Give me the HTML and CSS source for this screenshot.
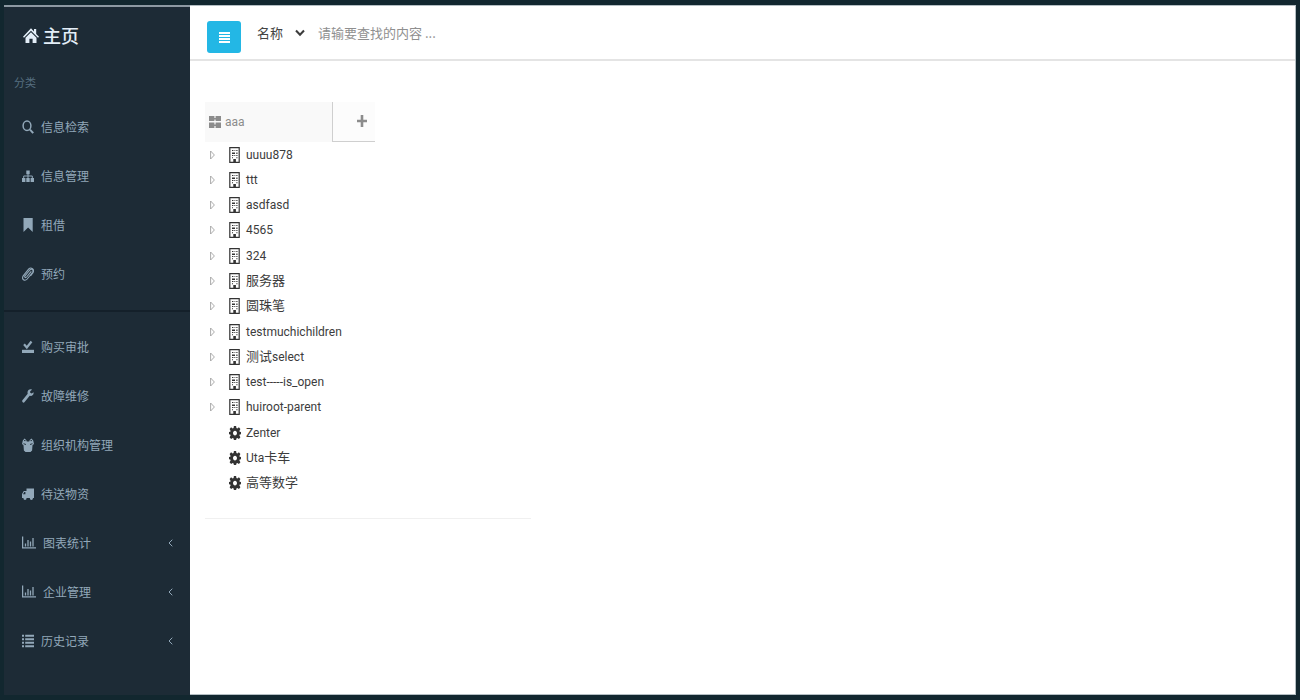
FILE: index.html
```html
<!DOCTYPE html>
<html lang="zh-CN">
<head>
<meta charset="utf-8">
<title>主页</title>
<link rel="stylesheet" href="styles.css">
</head>
<body>
<svg class="sprite" aria-hidden="true">
  <symbol id="chart" viewBox="0 0 14 12"><path d="M.6 0v11.4H14M3.5 7v3M6 3.500v6.500M8.500 5v5M11 1.500v8.500" fill="none" stroke="currentColor" stroke-width="1.300"/></symbol>
  <symbol id="left" viewBox="0 0 5 8"><path d="M4.300.7 1 4l3.300 3.300" fill="none" stroke="currentColor"/></symbol>
  <symbol id="building" viewBox="0 0 11 16"><path d="M.8.7h9.400v14.600H.8z" fill="#fff" stroke="currentColor" stroke-width="1.200"/><path d="M3 3h1.400v1H3zM5.500 3h.8v1h-.8zM7.300 3h1.200v1H7.300zM3 5.500h3V7H3zM7.300 5.500h1.200V7H7.300zM3 8h1.400v1H3zM5.300 8h1v1h-1zM7.300 8h1.200v1H7.300zM3 10.300h1v1H3zM7.300 10.300h1.200v1H7.300zM4.300 12h2.600v3H4.300z" fill="currentColor"/></symbol>
  <symbol id="gear" viewBox="0 0 12 14"><path fill="currentColor" fill-rule="evenodd" d="M4.900 0h2.200l.3 2 1 .5 1.500-1.200 1.500 1.800-1 1.800.3.900 1.300.3v2.100l-1.300.4-.3.900 1 1.800-1.500 1.700-1.500-1.100-1 .5-.3 1.800H4.900l-.3-1.800-1-.5L2.100 13 .6 11.300l1-1.800-.3-.9L0 8.200V6.100l1.300-.3.300-.9-1-1.800 1.500-1.800 1.500 1.200 1-.5zM6 4.700C4.900 4.700 4 5.700 4 7.100s.9 2.500 2 2.500 2-1.100 2-2.500-.9-2.400-2-2.400z"/></symbol>
  <symbol id="tri" viewBox="0 0 5 10"><path d="M.6 1 4.400 5 .6 9z" fill="none" stroke="currentColor" stroke-width=".9"/></symbol>
</svg>
<div class="app">
  <aside class="sidebar">
    <a class="brand" href="#">
      <svg class="home" viewBox="0 0 16 16" aria-hidden="true"><path fill="currentColor" d="M8 .8 11 4V1.600h2.200v4.800L16 9.300l-1 1L8 3.200l-7 7.100-1-1zM8 4.700l5.500 5.600v5.200H9.600v-4.300H6.400v4.300H2.500v-5.200z"/></svg>
      <span>主页</span>
    </a>
    <h2 class="caption">分类</h2>
    <nav>
      <ul class="menu">
        <li><a href="#"><svg class="icon" viewBox="0 0 12 14"><ellipse cx="5" cy="5.800" rx="3.900" ry="4.700" fill="none" stroke="currentColor" stroke-width="1.500"/><path d="m8 9.700 3.200 3.500" stroke="currentColor" stroke-width="2"/></svg><span>信息检索</span></a></li>
        <li><a href="#"><svg class="icon" viewBox="0 0 12 14"><path d="M4.300 1.500h3.400v3.700H4.300zM0 9h3.400v4H0zM4.300 9h3.400v4H4.300zM8.600 9H12v4H8.600z" fill="currentColor"/><path d="M6 5v4M1.700 9V7h8.600v2" fill="none" stroke="currentColor"/></svg><span>信息管理</span></a></li>
        <li><a href="#"><svg class="icon" viewBox="0 0 12 14"><path d="M1.500 0h9.200v14L6.100 9.600 1.500 14z" fill="currentColor"/></svg><span>租借</span></a></li>
        <li><a href="#"><svg class="icon" viewBox="0 0 12 14"><path d="M9.300 4.300 4.600 10c-1.200 1.300-2.500 0-1.600-1.200L7.800 3c1.900-2 4.200.3 2.700 2.500L5.200 12c-2.500 2.700-6 .2-4-3.100l5.600-7C9-.3 13 2.200 11 5.700L8.500 9" fill="none" stroke="currentColor" stroke-width="1.100"/></svg><span>预约</span></a></li>
      </ul>
      <hr class="divider">
      <ul class="menu">
        <li><a href="#"><svg class="icon" viewBox="0 0 12 14"><path d="M0 9.800h12V13H0z" fill="currentColor"/><path d="m2 4.300 2.800 3.200L9.500 1.500" fill="none" stroke="currentColor" stroke-width="2.200"/></svg><span>购买审批</span></a></li>
        <li><a href="#"><svg class="icon" viewBox="0 0 12 14"><path d="M11.500 3.200 9.700 4.500 8.200 3.700V2.200L10 .7C8-.3 5.700 1 5.500 3.200c0 .7.100 1.200.2 1.600L.4 11.200c-.9 1.300.7 3.200 2 2.100l5.300-6.500c2.300.7 4.400-1 3.800-3.600z" fill="currentColor"/></svg><span>故障维修</span></a></li>
        <li><a href="#"><svg class="icon" viewBox="0 0 12 14"><path d="M2.500.5 4.200 2l.6 1.500h2.400L7.800 2 9.500.5l1.700 2L12 6l-1.500 1.200-.4 5.300L8.500 14h-5l-1.600-1.500-.4-5.300L0 6l.8-3.500z" fill="currentColor"/><path d="M2 2.600h1.500M8.500 2.600H10M1.500 5.700 4 6.500M10.500 5.700 8 6.500" stroke="#1d2b36" stroke-width=".9"/></svg><span>组织机构管理</span></a></li>
        <li><a href="#"><svg class="icon" viewBox="0 0 12 14"><path fill="currentColor" fill-rule="evenodd" d="M4.500 1.500H12V11h-1a1.600 2 0 0 1-3.200 0H4.600a1.600 2 0 0 1-3.200 0H0V7l1.800-3h2.700zM2.300 5 1 7.200h2.400V5z"/></svg><span>待送物资</span></a></li>
        <li><a href="#"><svg class="icon wide"><use href="#chart"/></svg><span>图表统计</span><svg class="chevron"><use href="#left"/></svg></a></li>
        <li><a href="#"><svg class="icon wide"><use href="#chart"/></svg><span>企业管理</span><svg class="chevron"><use href="#left"/></svg></a></li>
        <li><a href="#"><svg class="icon" viewBox="0 0 12 14"><path d="M0 1.800h2M3.200 1.800H12M0 5.300h2M3.200 5.300H12M0 8.800h2M3.200 8.800H12M0 12.300h2M3.200 12.300H12" stroke="currentColor" stroke-width="2"/></svg><span>历史记录</span><svg class="chevron"><use href="#left"/></svg></a></li>
      </ul>
    </nav>
  </aside>
  <div class="content">
    <header class="topbar">
      <button class="toggle" type="button" aria-label="菜单"><svg viewBox="0 0 11 11"><path d="M0 1h11M0 4h11M0 7h11M0 10h11" stroke="currentColor" stroke-width="1.800"/></svg></button>
      <form class="search">
        <div class="field">
          <select aria-label="查找字段"><option>名称</option></select>
          <svg class="arrow" viewBox="0 0 10 8"><path d="m1 1.500 4 4.300 4-4.300" fill="none" stroke="currentColor" stroke-width="2"/></svg>
        </div>
        <input type="text" aria-label="查找内容" placeholder="请输要查找的内容 ...">
      </form>
    </header>
    <main>
      <div class="tabs">
        <button class="tab" type="button"><svg viewBox="0 0 12 12"><path d="M0 0h5.400v5H0zM6.600 0H12v5H6.600zM0 6.500h5.400V12H0zM6.600 6.500H12V12H6.600zM5 2h2v1.400H5zM5 8.500h2v1.400H5z" fill="currentColor"/></svg><span>aaa</span></button>
        <button class="add" type="button" aria-label="添加"><svg viewBox="0 0 10 12"><path d="M5 0v12M0 6h10" stroke="currentColor" stroke-width="2.600"/></svg></button>
      </div>
      <ul class="tree">
        <li><svg class="tri"><use href="#tri"/></svg><svg class="node"><use href="#building"/></svg><span>uuuu878</span></li>
        <li><svg class="tri"><use href="#tri"/></svg><svg class="node"><use href="#building"/></svg><span>ttt</span></li>
        <li><svg class="tri"><use href="#tri"/></svg><svg class="node"><use href="#building"/></svg><span>asdfasd</span></li>
        <li><svg class="tri"><use href="#tri"/></svg><svg class="node"><use href="#building"/></svg><span>4565</span></li>
        <li><svg class="tri"><use href="#tri"/></svg><svg class="node"><use href="#building"/></svg><span>324</span></li>
        <li><svg class="tri"><use href="#tri"/></svg><svg class="node"><use href="#building"/></svg><span class="han">服务器</span></li>
        <li><svg class="tri"><use href="#tri"/></svg><svg class="node"><use href="#building"/></svg><span class="han">圆珠笔</span></li>
        <li><svg class="tri"><use href="#tri"/></svg><svg class="node"><use href="#building"/></svg><span>testmuchichildren</span></li>
        <li><svg class="tri"><use href="#tri"/></svg><svg class="node"><use href="#building"/></svg><span><span class="han">测试</span>select</span></li>
        <li><svg class="tri"><use href="#tri"/></svg><svg class="node"><use href="#building"/></svg><span>test-----is_open</span></li>
        <li><svg class="tri"><use href="#tri"/></svg><svg class="node"><use href="#building"/></svg><span>huiroot-parent</span></li>
        <li class="leaf"><svg class="node gear"><use href="#gear"/></svg><span>Zenter</span></li>
        <li class="leaf"><svg class="node gear"><use href="#gear"/></svg><span>Uta<span class="han">卡车</span></span></li>
        <li class="leaf"><svg class="node gear"><use href="#gear"/></svg><span class="han">高等数学</span></li>
      </ul>
    </main>
  </div>
</div>
</body>
</html>
```
FILE: styles.css
```css
* { box-sizing: border-box; }

body {
  margin: 0;
  background: #12272f;
  color: #3c3c3c;
  font: 13px/20px "Noto Sans CJK SC", sans-serif;
}

ul { margin: 0; padding: 0; list-style: none; }
a { color: inherit; text-decoration: none; }
button, input, select { font: inherit; color: inherit; border: 0; padding: 0; background: none; }
svg { display: block; flex: none; }
.sprite { position: absolute; width: 0; height: 0; }

.app {
  display: flex;
  min-height: 100vh;
  border: solid #12272f;
  border-width: 5px 4px 5px 4px;
}

/* Sidebar */
.sidebar {
  flex: none;
  width: 186px;
  border-top: 2px solid #8d99a2;
  background: #1d2b36;
  color: #92a8b9;
  font-size: 12px;
}

.brand {
  display: flex;
  align-items: center;
  gap: 4px;
  padding: 15px 19px 0;
  color: #e3eef8;
  font-size: 18px;
  font-weight: 500;
  line-height: 26px;
}
.home { width: 16px; height: 17px; }

.caption {
  margin: 24px 10px 10px;
  color: #566f80;
  font-size: 11px;
  font-weight: 400;
  line-height: 20px;
}

.menu a {
  display: flex;
  align-items: center;
  gap: 7px;
  height: 49px;
  padding: 0 17px 0 18px;
}
.icon { width: 12px; height: 14px; }
.icon.wide { width: 14px; height: 13px; }
.chevron { width: 5px; height: 8px; margin-left: auto; }

.divider {
  height: 2px;
  margin: 12px 0 10px;
  border: 0;
  background: #14202a;
}

/* Content */
.content {
  flex: 1;
  min-width: 0;
  border: 1px solid #b4bec3;
  border-left: 0;
  background: #fff;
}

.topbar {
  display: flex;
  align-items: flex-start;
  gap: 16px;
  height: 55px;
  padding: 15px 17px 0;
  border-bottom: 2px solid #e4e4e4;
}

.toggle {
  display: grid;
  place-items: center;
  width: 34px;
  height: 32px;
  border-radius: 3px;
  background: #23b7e5;
  color: #fff;
}
.toggle svg { width: 11px; height: 11px; }

.search { display: flex; flex: 1; gap: 13px; padding-top: 2px; }
.field { display: flex; align-items: center; position: relative; width: 48px; }
.field select { width: 100%; height: 20px; appearance: none; color: #444; }
.arrow { position: absolute; right: 0; width: 10px; height: 8px; pointer-events: none; }
.search input { flex: 1; min-width: 0; height: 20px; outline: 0; }
.search input::placeholder { color: #8f8f8f; opacity: 1; }

main {
  padding: 41px 15px;
  font-family: Roboto, "Noto Sans CJK SC", sans-serif;
  font-size: 12px;
}

.tabs { display: flex; height: 40px; color: #8c8c8c; }
.tab {
  display: flex;
  align-items: center;
  gap: 4px;
  width: 127px;
  padding-left: 4px;
  background: #f9f9f9;
}
.tab svg { width: 12px; height: 12px; }
.add {
  display: grid;
  place-items: center;
  width: 43px;
  padding: 0 0 2px 16px;
  border: solid #cfcfcf;
  border-width: 0 0 1px 1px;
  background: #fcfcfc;
}
.add svg { width: 10px; height: 12px; }

.tree {
  display: grid;
  grid-auto-rows: 1fr;
  max-width: 326px;
  min-height: 377px;
  padding-bottom: 22px;
  border-bottom: 1px solid #f0f0f0;
}
.tree li { display: flex; align-items: center; padding-left: 5px; }
.tri { width: 5px; height: 10px; margin-right: 14px; color: #a2a2a2; }
.node { width: 11px; height: 16px; margin-right: 6px; color: #333; }
.node.gear { width: 12px; height: 14px; margin-right: 5px; }
.tree .leaf { padding-left: 24px; }
.han { font-size: 13px; }
```
